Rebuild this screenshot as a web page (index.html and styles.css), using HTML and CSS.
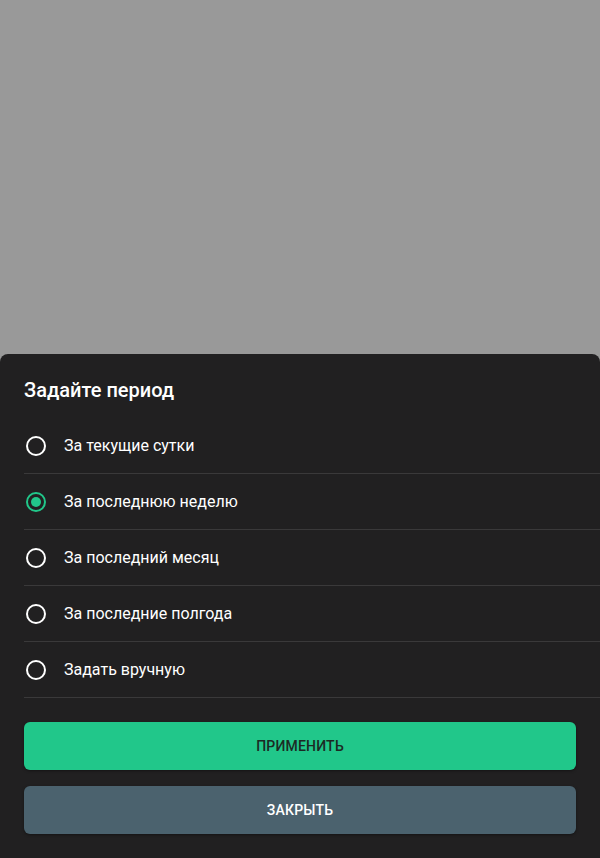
FILE: index.html
```html
<!DOCTYPE html>
<html lang="ru">
<head>
<meta charset="utf-8">
<link rel="stylesheet" href="styles.css">
</head>
<body>
<div class="backdrop"></div>
<div class="sheet">
  <h2 class="title">Задайте период</h2>
  <ul class="options">
    <li class="option"><span class="radio"></span><span class="label">За текущие сутки</span></li>
    <li class="option"><span class="radio checked"></span><span class="label">За последнюю неделю</span></li>
    <li class="option"><span class="radio"></span><span class="label">За последний месяц</span></li>
    <li class="option"><span class="radio"></span><span class="label">За последние полгода</span></li>
    <li class="option"><span class="radio"></span><span class="label">Задать вручную</span></li>
  </ul>
  <div class="actions">
    <button class="btn btn-apply">ПРИМЕНИТЬ</button>
    <button class="btn btn-close">ЗАКРЫТЬ</button>
  </div>
</div>
</body>
</html>
```
FILE: styles.css
```css
* { box-sizing: border-box; }
html, body { margin: 0; padding: 0; height: 100%; }
body {
  background: #999999;
  font-family: Roboto, "Noto Sans", sans-serif;
  display: flex;
  flex-direction: column;
  height: 858px;
  overflow: hidden;
}
.backdrop { flex: 1; }
.sheet {
  background: #212021;
  border-radius: 8px 8px 0 0;
  padding: 24px 0 24px 24px;
  color: #fff;
}
.title {
  margin: 0;
  font-size: 20px;
  font-weight: 500;
  line-height: 24px;
  height: 40px;
}
.options { list-style: none; margin: 0; padding: 0; }
.option {
  display: flex;
  align-items: center;
  height: 56px;
  border-bottom: 1px solid #3a393a;
}
.radio {
  width: 20px;
  height: 20px;
  border: 2px solid #ffffff;
  border-radius: 50%;
  margin: 0 18px 0 2px;
  display: flex;
  align-items: center;
  justify-content: center;
  flex: none;
}
.radio.checked { border-color: #21c78a; }
.radio.checked::after {
  content: "";
  width: 10px;
  height: 10px;
  border-radius: 50%;
  background: #21c78a;
}
.label { font-size: 16px; line-height: 20px; color: #ffffff; }
.actions {
  display: flex;
  flex-direction: column;
  gap: 16px;
  padding: 24px 24px 0 0;
}
.btn {
  height: 48px;
  border: none;
  border-radius: 6px;
  font-family: Roboto, "Noto Sans", sans-serif;
  font-size: 14px;
  font-weight: 500;
  letter-spacing: 0.2px;
  box-shadow: 0 1px 3px rgba(0,0,0,0.4);
}
.btn-apply { background: #21c78a; color: #1c2a24; }
.btn-close { background: #4b626e; color: #ffffff; }
```
